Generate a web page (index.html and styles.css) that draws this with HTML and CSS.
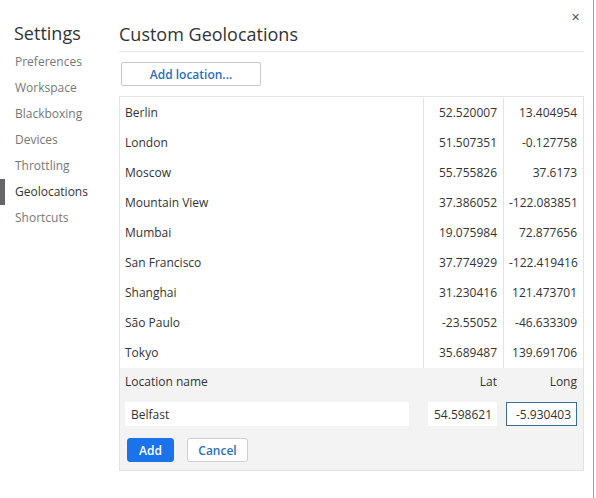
FILE: index.html
```html
<!DOCTYPE html>
<html lang="en">
<head>
  <meta charset="UTF-8" />
  <title>Settings - Geolocations</title>
  <link rel="stylesheet" href="styles.css">
</head>
<body>
  <div class="dialog">
    <nav class="sidebar">
      <h1>Settings</h1>
      <ul>
        <li>Preferences</li>
        <li>Workspace</li>
        <li>Blackboxing</li>
        <li>Devices</li>
        <li>Throttling</li>
        <li class="selected">Geolocations</li>
        <li>Shortcuts</li>
      </ul>
    </nav>

    <main class="content">
      <h2>Custom Geolocations</h2>
      <button class="add-location">Add location...</button>

      <div class="geo-list">
        <div class="geo-row"><span>Berlin</span><span class="num">52.520007</span><span class="num">13.404954</span></div>
        <div class="geo-row"><span>London</span><span class="num">51.507351</span><span class="num">-0.127758</span></div>
        <div class="geo-row"><span>Moscow</span><span class="num">55.755826</span><span class="num">37.6173</span></div>
        <div class="geo-row"><span>Mountain View</span><span class="num">37.386052</span><span class="num">-122.083851</span></div>
        <div class="geo-row"><span>Mumbai</span><span class="num">19.075984</span><span class="num">72.877656</span></div>
        <div class="geo-row"><span>San Francisco</span><span class="num">37.774929</span><span class="num">-122.419416</span></div>
        <div class="geo-row"><span>Shanghai</span><span class="num">31.230416</span><span class="num">121.473701</span></div>
        <div class="geo-row"><span>São Paulo</span><span class="num">-23.55052</span><span class="num">-46.633309</span></div>
        <div class="geo-row"><span>Tokyo</span><span class="num">35.689487</span><span class="num">139.691706</span></div>

        <div class="editor">
          <div class="editor-labels">
            <span>Location name</span>
            <span class="num">Lat</span>
            <span class="num">Long</span>
          </div>
          <div class="editor-inputs">
            <input type="text" class="name-input" value="Belfast" />
            <input type="text" class="lat-input" value="54.598621" />
            <input type="text" class="long-input focused" value="-5.930403" />
          </div>
          <div class="editor-buttons">
            <button class="primary">Add</button>
            <button class="secondary">Cancel</button>
          </div>
        </div>
      </div>
    </main>

    <span class="close">&#x2715;</span>
  </div>
</body>
</html>
```

FILE: styles.css
```css
body {
  margin: 0;
  font-family: "Segoe UI", "Open Sans", sans-serif;
  font-size: 12px;
  color: #333;
  background: #fff;
}
.dialog {
  position: relative;
  display: flex;
  width: 594px;
  height: 498px;
  border-right: 1px solid #a0a0a0;
  box-sizing: border-box;
}
.sidebar {
  width: 119px;
  flex: none;
}
.sidebar h1 {
  margin: 21px 0 0 14px;
  font-size: 18px;
  font-weight: normal;
  line-height: 24px;
  color: #333;
}
.sidebar ul {
  list-style: none;
  margin: 4px 0 0;
  padding: 0;
}
.sidebar li {
  height: 26px;
  line-height: 26px;
  padding-left: 15px;
  color: #777;
}
.sidebar li.selected {
  color: #333;
  border-left: 5px solid #666;
  padding-left: 10px;
}
.content {
  flex: 1;
  padding-right: 10px;
}
.content h2 {
  margin: 22px 0 0;
  font-size: 18px;
  font-weight: normal;
  line-height: 24px;
  color: #333;
  padding-bottom: 5px;
  border-bottom: 1px solid #e6e6e6;
}
.add-location {
  margin: 10px 0 0 2px;
  width: 140px;
  height: 24px;
  background: #fff;
  border: 1px solid #c8c8c8;
  border-radius: 2px;
  font-family: inherit;
  font-size: 12px;
  font-weight: 600;
  color: #2e6fb8;
}
.geo-list {
  margin-top: 10px;
  padding-top: 1px;
  border: 1px solid #e3e3e3;
  border-bottom: 0;
  width: 463px;
}
.geo-row {
  display: grid;
  grid-template-columns: 303px 80px 80px;
  height: 30px;
  line-height: 30px;
}
.geo-row span {
  padding: 0 6px 0 5px;
}
.geo-row span + span {
  border-left: 1px solid #e3e3e3;
}
.num {
  text-align: right;
}
.editor {
  background: #f3f3f3;
  border-bottom: 1px solid #e3e3e3;
  padding-bottom: 8px;
}
.editor-labels {
  display: grid;
  grid-template-columns: 303px 80px 80px;
  height: 28px;
  line-height: 28px;
}
.editor-labels span {
  padding: 0 6px 0 5px;
}
.editor-inputs {
  display: grid;
  grid-template-columns: 303px 80px 80px;
  margin-top: 6px;
}
.editor-inputs input {
  height: 24px;
  box-sizing: border-box;
  border: 1px solid transparent;
  background: #fff;
  font-family: inherit;
  font-size: 12px;
  color: #333;
  padding: 0 5px;
  outline: none;
}
.name-input {
  margin: 0 14px 0 5px;
}
.lat-input {
  margin: 0 6px 0 5px;
  text-align: right;
}
.long-input {
  margin: 0 6px 0 3px;
  text-align: right;
}
.editor-inputs input.focused {
  border-color: #3b6e96;
}
.editor-buttons {
  display: flex;
  gap: 13px;
  margin: 12px 0 0 7px;
}
.editor-buttons button {
  height: 24px;
  border-radius: 3px;
  font-family: inherit;
  font-size: 12px;
  font-weight: 600;
}
.primary {
  width: 47px;
  background: #1a73e8;
  border: 1px solid #1a73e8;
  color: #fff;
}
.secondary {
  width: 61px;
  background: #fff;
  border: 1px solid #cfcfcf;
  color: #2e6fb8;
}
.close {
  position: absolute;
  top: 9px;
  right: 13px;
  font-size: 11px;
  color: #555;
}
```
